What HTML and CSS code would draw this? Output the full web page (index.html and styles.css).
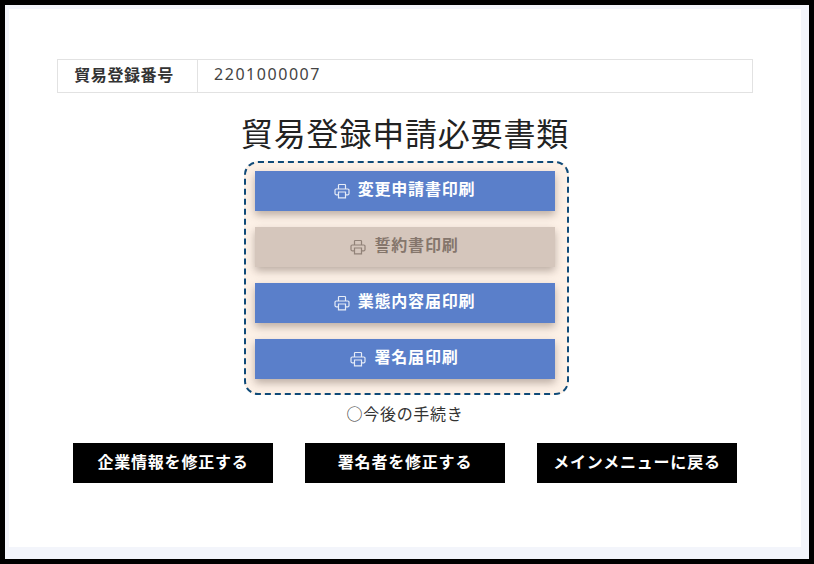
FILE: index.html
```html
<!DOCTYPE html>
<html lang="ja">
<head>
<meta charset="utf-8">
<title>貿易登録申請必要書類</title>
<link rel="stylesheet" href="styles.css">
</head>
<body>
<svg class="sprite" width="0" height="0" aria-hidden="true">
  <symbol id="printer" viewBox="0 0 16 16">
    <path d="M4.5 6V2.2a.7.7 0 0 1 .7-.7h5.6a.7.7 0 0 1 .7.7V6M4.2 11.8H2.2a1.2 1.2 0 0 1-1.2-1.2V7.2A1.2 1.2 0 0 1 2.2 6h11.6a1.2 1.2 0 0 1 1.2 1.2v3.4a1.2 1.2 0 0 1-1.2 1.2h-2M4.5 9h7v5.8h-7z" fill="none" stroke="currentColor" stroke-width="1.2" opacity=".85"/>
  </symbol>
</svg>
<div class="frame">
  <main class="panel">
    <table class="info">
      <tr><th>貿易登録番号</th><td>2201000007</td></tr>
    </table>
    <h1 class="title">貿易登録申請必要書類</h1>
    <section class="docs">
      <button class="print"><svg class="icon"><use href="#printer"/></svg>変更申請書印刷</button>
      <button class="print off"><svg class="icon"><use href="#printer"/></svg>誓約書印刷</button>
      <button class="print"><svg class="icon"><use href="#printer"/></svg>業態内容届印刷</button>
      <button class="print"><svg class="icon"><use href="#printer"/></svg>署名届印刷</button>
    </section>
    <p class="next">○今後の手続き</p>
    <nav class="actions">
      <button class="action">企業情報を修正する</button>
      <button class="action">署名者を修正する</button>
      <button class="action">メインメニューに戻る</button>
    </nav>
  </main>
</div>
</body>
</html>
```
FILE: styles.css
```css
* { box-sizing: border-box; }
html, body { margin: 0; padding: 0; }
body {
  width: 814px;
  height: 564px;
  overflow: hidden;
  background: #000;
  font-family: "Noto Sans CJK JP", "Noto Sans", sans-serif;
}
.sprite { position: absolute; }
.frame {
  width: 804px;
  height: 554px;
  margin: 5px;
  padding: 4px 8px 12px 4px;
  background: #f3f5fb;
}
.panel {
  height: 538px;
  padding-top: 50px;
  background: #fff;
  display: flex;
  flex-direction: column;
  align-items: center;
}
.info {
  width: 696px;
  height: 34px;
  border-collapse: collapse;
  font-size: 16px;
  color: #333;
}
.info th, .info td {
  border: 1px solid #e2e2e2;
  padding: 0 0 4px;
}
.info th { width: 140px; padding-right: 7px; font-weight: 700; text-align: center; letter-spacing: .6px; }
.info td { padding-left: 16px; letter-spacing: 1.55px; font-family: "Noto Sans", sans-serif; font-size: 16px; color: #444; }
.title {
  margin: 21px 0 0;
  height: 47px;
  font-size: 32px;
  line-height: 36px;
  font-weight: 400;
  letter-spacing: .8px;
  color: #222;
  text-align: center;
}
.docs {
  width: 325px;
  height: 234px;
  margin-left: 2px;
  padding: 8px 0 0 9px;
  border: 2px dashed #0f4a78;
  border-radius: 14px;
  background: #fdf1e7;
  display: flex;
  flex-direction: column;
  align-items: flex-start;
  gap: 16px;
}
.print {
  flex: none;
  width: 300px;
  height: 40px;
  border: 0;
  padding: 0 0 6px;
  background: #5a7fca;
  color: #fff;
  font: 700 16px/1 "Noto Sans CJK JP", sans-serif;
  letter-spacing: .8px;
  box-shadow: 0 4px 8px rgba(70, 50, 40, .35);
  display: flex;
  align-items: center;
  justify-content: center;
  gap: 8px;
}
.print.off {
  background: #d5c6bc;
  color: #85766c;
}
.icon { width: 16px; height: 16px; flex: none; margin-top: 6px; }
.next {
  margin: 8px 0 0;
  height: 20px;
  font-size: 16px;
  line-height: 20px;
  letter-spacing: .7px;
  color: #333;
}
.actions {
  margin-top: 20px;
  display: flex;
  gap: 32px;
}
.action {
  width: 200px;
  height: 40px;
  border: 0;
  padding: 0 0 4px;
  background: #000;
  color: #fff;
  font: 700 16px/1 "Noto Sans CJK JP", sans-serif;
  letter-spacing: .8px;
}
```
